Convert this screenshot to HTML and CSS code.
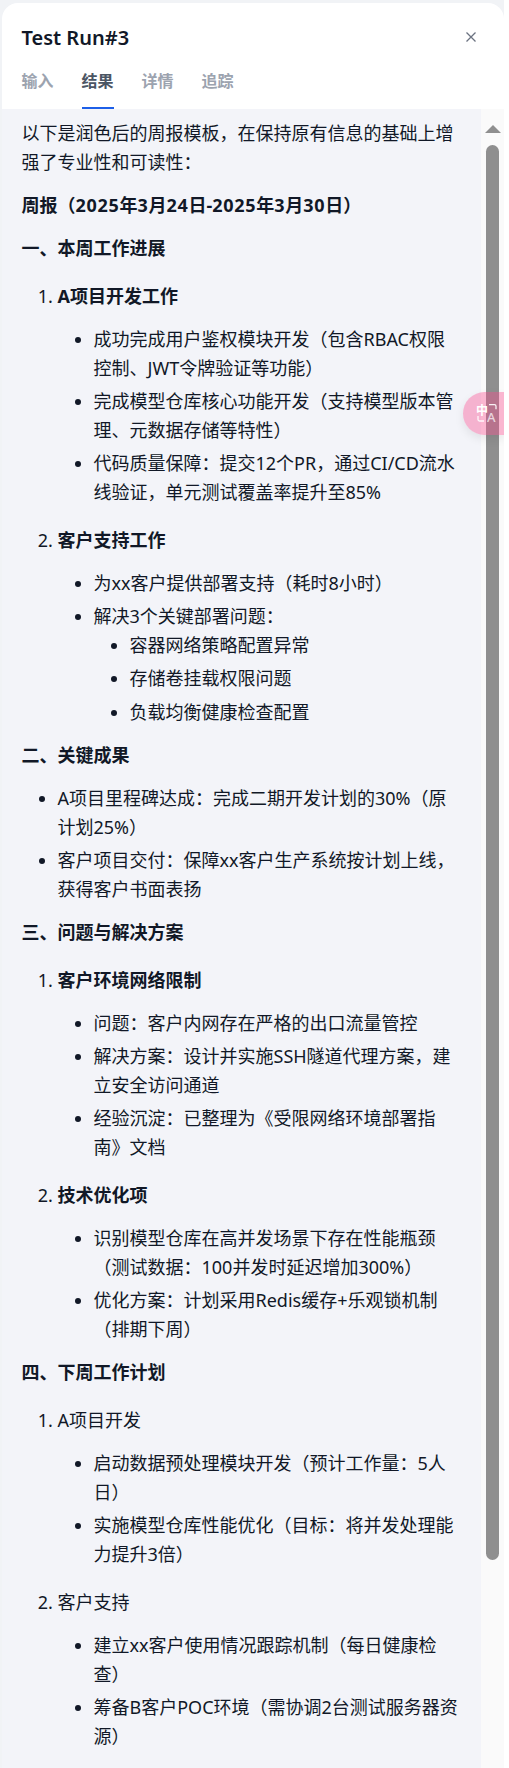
FILE: index.html
```html
<!DOCTYPE html>
<html lang="zh-CN">
<head>
<meta charset="utf-8">
<title>Test Run#3</title>
<link rel="stylesheet" href="styles.css">
</head>
<body>
<div class="panel">
  <header class="head">
    <div class="title-row">
      <h1 class="title">Test Run#3</h1>
      <svg class="close" viewBox="0 0 10 10" width="10" height="10" aria-hidden="true"><path d="M.5.5 9.500 9.500M9.500.5.5 9.500" fill="none" stroke="currentColor" stroke-width="1.300"/></svg>
    </div>
    <nav class="tabs">
      <span class="tab">输入</span>
      <span class="tab active">结果</span>
      <span class="tab">详情</span>
      <span class="tab">追踪</span>
    </nav>
  </header>
  <div class="body">
    <main class="doc">
      <p>以下是润色后的周报模板，在保持原有信息的基础上增强了专业性和可读性：</p>
      <p><strong>周报（<span class="num">2025</span>年<span class="num">3</span>月<span class="num">24</span>日-<span class="num">2025</span>年<span class="num">3</span>月<span class="num">30</span>日）</strong></p>
      <p><strong>一、本周工作进展</strong></p>
      <ol>
        <li><p><strong>A项目开发工作</strong></p>
          <ul>
            <li>成功完成用户鉴权模块开发（包含RBAC权限控制、JWT令牌验证等功能）</li>
            <li>完成模型仓库核心功能开发（支持模型版本管理、元数据存储等特性）</li>
            <li>代码质量保障：提交12个PR，通过CI/CD流水线验证，单元测试覆盖率提升至85%</li>
          </ul>
        </li>
        <li><p><strong>客户支持工作</strong></p>
          <ul>
            <li>为xx客户提供部署支持（耗时8小时）</li>
            <li>解决3个关键部署问题：
              <ul>
                <li>容器网络策略配置异常</li>
                <li>存储卷挂载权限问题</li>
                <li>负载均衡健康检查配置</li>
              </ul>
            </li>
          </ul>
        </li>
      </ol>
      <p><strong>二、关键成果</strong></p>
      <ul>
        <li>A项目里程碑达成：完成二期开发计划的30%（原计划25%）</li>
        <li>客户项目交付：保障xx客户生产系统按计划上线，获得客户书面表扬</li>
      </ul>
      <p><strong>三、问题与解决方案</strong></p>
      <ol>
        <li><p><strong>客户环境网络限制</strong></p>
          <ul>
            <li>问题：客户内网存在严格的出口流量管控</li>
            <li>解决方案：设计并实施SSH隧道代理方案，建立安全访问通道</li>
            <li>经验沉淀：已整理为《受限网络环境部署指南》文档</li>
          </ul>
        </li>
        <li><p><strong>技术优化项</strong></p>
          <ul>
            <li>识别模型仓库在高并发场景下存在性能瓶颈（测试数据：100并发时延迟增加300%）</li>
            <li>优化方案：计划采用Redis缓存+乐观锁机制（排期下周）</li>
          </ul>
        </li>
      </ol>
      <p><strong>四、下周工作计划</strong></p>
      <ol>
        <li><p>A项目开发</p>
          <ul>
            <li>启动数据预处理模块开发（预计工作量：5人日）</li>
            <li>实施模型仓库性能优化（目标：将并发处理能力提升3倍）</li>
          </ul>
        </li>
        <li><p>客户支持</p>
          <ul>
            <li>建立xx客户使用情况跟踪机制（每日健康检查）</li>
            <li>筹备B客户POC环境（需协调2台测试服务器资源）</li>
          </ul>
        </li>
      </ol>
    </main>
    <div class="scrollbar" aria-hidden="true">
      <span class="arrow"></span>
      <span class="thumb"></span>
    </div>
  </div>
</div>
<div class="translate" aria-hidden="true">
  <svg viewBox="-2 -4 24 28" width="24" height="28">
    <text x="-1" y="11" class="ico-zh">中</text>
    <text x="10" y="18" class="ico-a">A</text>
    <path d="M12 .7h5.500a1.500 1.500 0 0 1 1.500 1.500v3M1 12v3.500A1.500 1.500 0 0 0 2.500 17H7" fill="none" stroke="#fff" stroke-width="1.300" opacity=".9"/>
  </svg>
</div>
</body>
</html>
```
FILE: styles.css
```css
* { box-sizing: border-box; }
html, body { margin: 0; height: 1768px; overflow: hidden; }
body {
  background: #f1f3f6;
  padding: 3px 0 0 2px;
  border-right: 5px solid #fff;
  font-family: "Noto Sans", "Noto Sans CJK SC", sans-serif;
  color: #111827;
  position: relative;
  text-spacing-trim: space-all;
}
.panel {
  display: flex;
  flex-direction: column;
  height: 1765px;
  background: #f3f4f9;
  border-radius: 16px 16px 0 0;
  overflow: hidden;
}
.head { background: #fff; flex: none; height: 106px; padding: 0 20px 0 19.500px; }
.title-row { display: flex; justify-content: space-between; align-items: center; height: 60px; padding-top: 8px; }
.title { margin: 0; font-size: 20px; font-weight: 600; }
.close { color: #6b7280; margin-right: 8px; }
.tabs { display: flex; gap: 28px; height: 46px; }
.tab { font-size: 16px; font-weight: 600; color: #9ca3af; line-height: 24px; padding-top: 6px; height: 46px; width: 32px; }
.tab.active { color: #4b5563; border-bottom: 2px solid #1d5fe8; }
.body { flex: 1; display: flex; min-height: 0; }
.doc { flex: 1; min-width: 0; padding: 10px 20px 0 19.500px; font-size: 18px; line-height: 28.8px; overflow: hidden; }
.doc p { margin: 0 0 14.4px; }
.doc ol, .doc ul { margin: 0 0 14.4px; padding-left: 36px; }
.doc ol { list-style: decimal; }
.doc ul { list-style: disc; }
.doc ol > li { padding-top: 4.500px; }
.doc ul > li + li { margin-top: 4.500px; }
.doc ul ul { margin: 0 0 2px; list-style: disc; }
.doc strong { font-weight: 700; }
.num { letter-spacing: .7px; }
.scrollbar { flex: none; width: 23px; background: #fafafa; display: flex; flex-direction: column; align-items: center; }
.arrow { margin-top: 16px; width: 0; height: 0; border-left: 8px solid transparent; border-right: 8px solid transparent; border-bottom: 8px solid #8f8f8f; }
.thumb { margin-top: 12px; width: 13px; height: 1415px; border-radius: 7px; background: #8f8f8f; }
.translate {
  position: absolute; left: 463px; top: 392px; width: 42px; height: 43px;
  border-radius: 22px 0 0 22px;
  background: rgba(250, 70, 140, .38);
  box-shadow: 0 4px 10px rgba(0,0,0,.08);
  display: flex; align-items: center; padding-left: 12px;
}
.ico-zh { font-size: 12px; font-weight: 700; fill: #fff; }
.ico-a { font-size: 13px; font-weight: 500; fill: #fff; opacity: .7; }
```
